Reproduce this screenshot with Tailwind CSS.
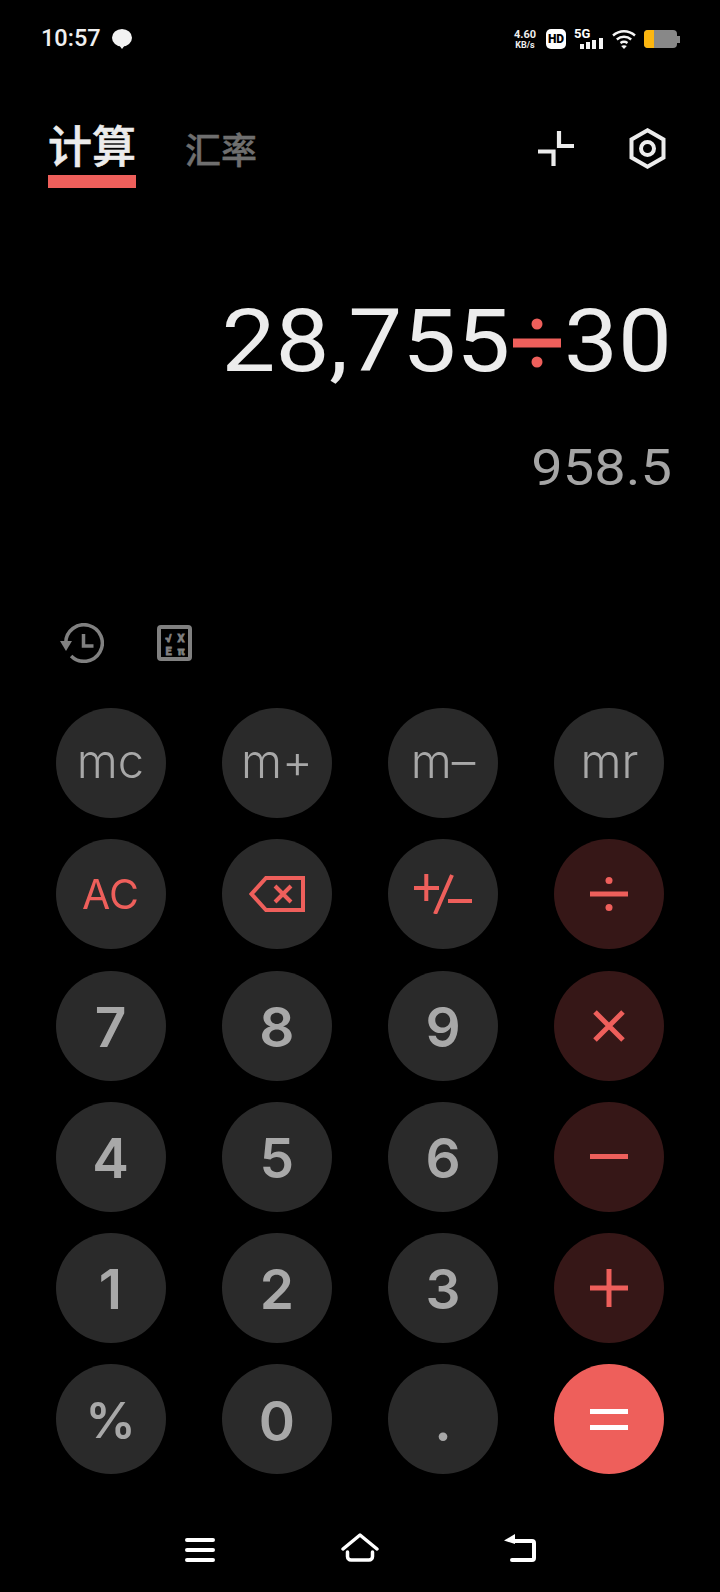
<!DOCTYPE html>
<html lang="zh">
<head>
  <meta charset="UTF-8">
  <meta name="viewport" content="width=device-width, initial-scale=1.0">
  <title>计算器</title>
  <script src="https://cdn.jsdelivr.net/npm/@tailwindcss/browser@4"></script>
</head>
<body class="bg-black">
  <div class="w-[720px] h-[1592px] bg-black flex flex-col font-['Roboto','Noto_Sans_CJK_SC',sans-serif] overflow-hidden">
    <!-- status bar -->
    <div class="h-[78px] pl-[41px] pr-[40px] flex items-center justify-between">
      <div class="flex items-center gap-[11px]">
        <span class="text-[23.5px] leading-none text-[#f0f0f0] font-medium">10:57</span>
        <svg class="w-[20px] h-[20px]" viewBox="0 0 20 20"><ellipse cx="10" cy="8.800" rx="10" ry="8.800" fill="#f2f2f2"/><path fill="#f2f2f2" d="M7 16l3 4 3-4z"/></svg>
      </div>
      <div class="flex items-center">
        <div class="w-[26px] flex flex-col items-center text-[#eee] font-bold">
          <span class="text-[11px] leading-[11px]">4.60</span>
          <span class="text-[9px] leading-[10px]">KB/s</span>
        </div>
        <div class="ml-[8px] w-[20px] h-[20px] rounded-[5px] bg-white flex items-center justify-center text-black text-[12px] leading-none font-black">HD</div>
        <div class="ml-[8px] w-[30px] h-[20px] relative">
          <span class="absolute left-0 -top-[2px] text-[13px] leading-[14px] font-bold text-white">5G</span>
          <svg class="absolute left-0 top-0" width="30" height="20" viewBox="0 0 30 20"><g fill="#f5f5f5"><rect x="6" y="15" width="4" height="5"/><rect x="12" y="13" width="4" height="7"/><rect x="18" y="11" width="4" height="9"/><rect x="25" y="9" width="4" height="11"/></g></svg>
        </div>
        <svg class="ml-[8px]" width="24" height="20" viewBox="0 0 24 20"><g fill="none" stroke="#f5f5f5" stroke-width="2.400"><path d="M1 6.500C7.500 .8 16.500 .8 23 6.500"/><path d="M4.800 10.500c4.300-3.600 10.100-3.600 14.400 0"/><path d="M8.500 14c2.200-1.500 4.800-1.500 7 0"/></g><path fill="#f5f5f5" d="M12 20l-2.800-3c1.700-1 3.900-1 5.600 0z"/></svg>
        <div class="ml-[8px] flex items-center">
          <div class="w-[33px] h-[18px] rounded-[4px] bg-[#888] overflow-hidden"><div class="w-[10px] h-full bg-[#fcb60f]"></div></div>
          <div class="w-[3px] h-[7px] bg-[#888]"></div>
        </div>
      </div>
    </div>

    <!-- tabs -->
    <div class="h-[116px] pl-[48px] pr-[54px] flex items-start justify-between">
      <div class="flex items-start">
        <div class="w-[88px] flex flex-col items-center">
          <span class="text-[44px] leading-[50px] mt-[45px] font-medium [-webkit-text-stroke:0.6px_#ececec] text-[#ececec]">计算</span>
          <div class="w-[88px] h-[13px] mt-[1.500px] bg-[#ee5f5b]"></div>
        </div>
        <span class="ml-[49px] mt-[49px] text-[36px] leading-[50px] font-medium [-webkit-text-stroke:0.4px_#6f6f6f] text-[#6f6f6f]">汇率</span>
      </div>
      <div class="flex items-center mt-[50px] gap-[55px]">
        <svg width="36" height="35" viewBox="0 0 36 35"><path fill="none" stroke="#ececec" stroke-width="4.200" d="M21 0v15h15M0 20.500h15.500V35"/></svg>
        <svg width="37" height="41" viewBox="0 0 37 41"><path fill="none" stroke="#ececec" stroke-width="4" d="M18.500 2.300l16 9.200v18l-16 9.200-16-9.200v-18z"/><circle cx="18.500" cy="20.500" r="6.500" fill="none" stroke="#ececec" stroke-width="4"/></svg>
      </div>
    </div>

    <!-- display -->
    <div class="h-[417.400px] pr-[48px] flex flex-col items-end will-change-transform">
      <div class="mt-[84px] flex items-center text-[96px] leading-[120px] text-[#ececec]">
        <span class="scale-y-90 origin-[50%_92.8px]">28,755</span>
        <svg class="mx-[3px]" width="48" height="64" viewBox="0 0 48 64"><g fill="#ee5f5b"><circle cx="24" cy="18" r="5.500"/><rect x="0" y="32.500" width="48" height="9"/><circle cx="24" cy="56" r="5.500"/></g></svg>
        <span class="scale-y-90 origin-[50%_92.8px]">30</span>
      </div>
      <div class="mt-[33px] text-[56px] leading-[70px] text-[#a5a5a5] scale-y-90 origin-[50%_54px]">958.5</div>
    </div>

    <!-- tools -->
    <div class="h-[97px] pl-[60px] flex items-start">
      <svg class="mt-[12px]" width="44" height="40" viewBox="0 0 44 40"><g fill="none" stroke="#808080" stroke-width="3.500"><path d="M5.700 20a18.300 18.300 0 1 1 5.400 13"/><path d="M23.500 11v12h10"/></g><path fill="#808080" d="M0 18h12l-6 10z"/></svg>
      <svg class="ml-[53px] mt-[14px]" width="35" height="36" viewBox="0 0 35 36"><rect x="2" y="2" width="31" height="32" rx="2" fill="none" stroke="#808080" stroke-width="4"/><g fill="#808080" stroke="#808080" stroke-width=".8" font-family="Roboto, 'DejaVu Sans', sans-serif" font-weight="700" font-size="11" text-anchor="middle"><text x="11.500" y="16.500">√</text><text x="24" y="16.500">X</text><text x="11.500" y="29.500">E</text><text x="24" y="29.500">π</text></g></svg>
    </div>

    <!-- keypad -->
    <div class="pl-[55.500px] grid grid-cols-[110px_110px_110px_110px] gap-x-[56.300px] gap-y-[21.300px] font-['Inter'] will-change-transform">
      <button class="h-[110px] pb-[3px] rounded-full bg-[#2a2a2a] text-[47px] font-light text-[#a8a8a8]">mc</button>
      <button class="h-[110px] pb-[3px] rounded-full bg-[#2a2a2a] text-[47px] font-light text-[#a8a8a8]">m+</button>
      <button class="h-[110px] pb-[3px] rounded-full bg-[#2a2a2a] text-[47px] font-light text-[#a8a8a8]">m–</button>
      <button class="h-[110px] pb-[3px] rounded-full bg-[#2a2a2a] text-[47px] font-light text-[#a8a8a8]">mr</button>

      <button class="h-[110px] rounded-full bg-[#2a2a2a] text-[41px] font-normal text-[#ee5f5b]">AC</button>
      <button class="h-[110px] rounded-full bg-[#2a2a2a] flex items-center justify-center">
        <svg width="56" height="36" viewBox="0 0 56 36"><path fill="none" stroke="#ee5f5b" stroke-width="4" d="M54 2v32H17L2.500 18 17 2zM26 10l16 16M42 10L26 26"/></svg>
      </button>
      <button class="h-[110px] rounded-full bg-[#2a2a2a] flex items-center justify-center">
        <svg width="58" height="40" viewBox="0 0 58 40"><path fill="none" stroke="#ee5f5b" stroke-width="4" d="M0 14h25M12.300 0v27M38 1L21 40M34 27h24"/></svg>
      </button>
      <button class="h-[110px] rounded-full bg-[#361717] flex items-center justify-center">
        <svg width="38" height="34" viewBox="0 0 38 34"><g fill="#ee5f5b"><circle cx="19" cy="3.500" r="3.500"/><rect y="14.500" width="38" height="5"/><circle cx="19" cy="30.500" r="3.500"/></g></svg>
      </button>

      <button class="h-[110px] pt-[3px] rounded-full bg-[#2a2a2a] text-[55px] font-semibold text-[#a8a8a8]">7</button>
      <button class="h-[110px] pt-[3px] rounded-full bg-[#2a2a2a] text-[55px] font-semibold text-[#a8a8a8]">8</button>
      <button class="h-[110px] pt-[3px] rounded-full bg-[#2a2a2a] text-[55px] font-semibold text-[#a8a8a8]">9</button>
      <button class="h-[110px] rounded-full bg-[#361717] flex items-center justify-center">
        <svg width="34" height="34" viewBox="0 0 34 34"><path fill="none" stroke="#ee5f5b" stroke-width="5" d="M3 3l28 28M31 3L3 31"/></svg>
      </button>

      <button class="h-[110px] pt-[3px] rounded-full bg-[#2a2a2a] text-[55px] font-semibold text-[#a8a8a8]">4</button>
      <button class="h-[110px] pt-[3px] rounded-full bg-[#2a2a2a] text-[55px] font-semibold text-[#a8a8a8]">5</button>
      <button class="h-[110px] pt-[3px] rounded-full bg-[#2a2a2a] text-[55px] font-semibold text-[#a8a8a8]">6</button>
      <button class="h-[110px] rounded-full bg-[#361717] flex items-center justify-center">
        <svg width="38" height="5" viewBox="0 0 38 5"><rect width="38" height="5" fill="#ee5f5b"/></svg>
      </button>

      <button class="h-[110px] pt-[3px] rounded-full bg-[#2a2a2a] text-[55px] font-semibold text-[#a8a8a8]">1</button>
      <button class="h-[110px] pt-[3px] rounded-full bg-[#2a2a2a] text-[55px] font-semibold text-[#a8a8a8]">2</button>
      <button class="h-[110px] pt-[3px] rounded-full bg-[#2a2a2a] text-[55px] font-semibold text-[#a8a8a8]">3</button>
      <button class="h-[110px] rounded-full bg-[#361717] flex items-center justify-center">
        <svg width="38" height="38" viewBox="0 0 38 38"><path fill="#ee5f5b" d="M16.500 0h5v16.500H38v5H21.500V38h-5V21.500H0v-5h16.500z"/></svg>
      </button>

      <button class="h-[110px] pt-[2px] rounded-full bg-[#2a2a2a] text-[50px] font-semibold text-[#a8a8a8]">%</button>
      <button class="h-[110px] pt-[3px] rounded-full bg-[#2a2a2a] text-[55px] font-semibold text-[#a8a8a8]">0</button>
      <button class="h-[110px] pt-[3px] rounded-full bg-[#2a2a2a] text-[55px] font-semibold text-[#a8a8a8]">.</button>
      <button class="h-[110px] rounded-full bg-[#ee5f5b] flex items-center justify-center">
        <svg width="38" height="21" viewBox="0 0 38 21"><rect width="38" height="5" fill="#fff"/><rect y="16" width="38" height="5" fill="#fff"/></svg>
      </button>
    </div>

    <!-- nav bar -->
    <div class="mt-[58px] pl-[185px] flex items-end">
      <svg width="30" height="24" viewBox="0 0 30 24"><path fill="none" stroke="#fff" stroke-width="4" stroke-linecap="round" d="M2 2h26M2 12h26M2 22h26"/></svg>
      <svg class="ml-[126px]" width="38" height="29" viewBox="0 0 38 29"><path fill="none" stroke="#fff" stroke-width="3.500" stroke-linecap="round" stroke-linejoin="round" d="M2 16L19 2l17 14M6.500 19v4.500a3.500 3.500 0 0 0 3.500 3.500h18a3.500 3.500 0 0 0 3.500-3.500V19"/></svg>
      <svg class="ml-[125px]" width="32" height="29" viewBox="0 0 32 29"><path fill="none" stroke="#fff" stroke-width="4" stroke-linecap="round" d="M11 8h17a2 2 0 0 1 2 2v15a2 2 0 0 1-2 2H8"/><path fill="#fff" d="M0 7.500L11 1v10z"/></svg>
    </div>
  </div>
</body>
</html>
